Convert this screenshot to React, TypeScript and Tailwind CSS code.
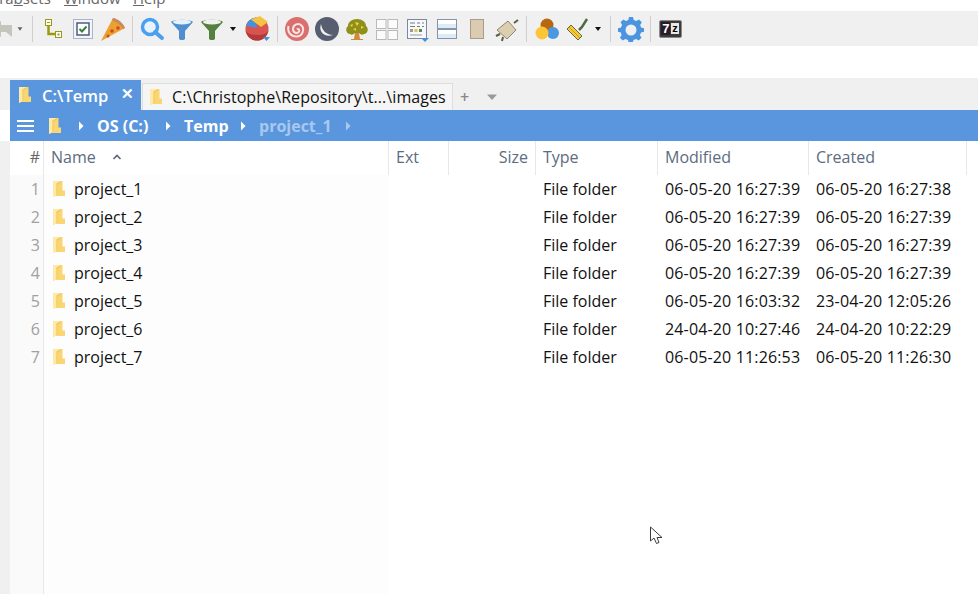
import React from "react";

const FONT = "font-['Open_Sans','Noto_Sans',sans-serif]";

const Folder = ({ className = "" }: { className?: string }) => (
  <svg width="14" height="18" viewBox="0 0 14 18" className={`shrink-0 ${className}`}>
    <path d="M1 1h9.500v9.500H13V16H3l-2 1z" fill="#f9d672" />
    <path d="M1 1h8l-4.500 2.500V15L1 17z" fill="#fdeaa8" />
    <path d="M4.500 3.500L9 1v1.500L5.500 4.500V15h-1z" fill="#f3c95e" />
  </svg>
);

const Caret = ({ color = "#111" }: { color?: string }) => (
  <svg width="12" height="6" viewBox="0 0 12 6">
    <path d="M3 1h6L6 5z" fill={color} />
  </svg>
);

const Sep = () => <div className="w-px h-[26px] bg-[#cfcfcf] shrink-0" />;

const Btn = ({ children }: { children: React.ReactNode }) => (
  <div className="w-[30px] h-[30px] shrink-0 flex items-center justify-center">
    <svg width="26" height="26" viewBox="0 0 26 26">
      {children}
    </svg>
  </div>
);

const Toolbar = () => (
  <div className="h-[35px] bg-[#f0f0f0] flex items-center overflow-hidden shrink-0">
    <div className="w-[30px] h-[30px] shrink-0 -ml-[15px] flex items-center justify-center">
      <svg width="26" height="26" viewBox="0 0 26 26">
        <path d="M1 13l13-8v4h11v12l-6-5h-5v5z" fill="#c4c6be" />
      </svg>
    </div>
    <div className="w-[10px] shrink-0 flex justify-center">
      <Caret color="#6b5f78" />
    </div>
    <div className="w-[7px] shrink-0" />
    <Sep />
    <div className="w-[5px] shrink-0" />
    <Btn>
      <rect x="5.500" y="3.500" width="6" height="6" fill="#fff" stroke="#9a9a10" />
      <path d="M7 6.500h3" stroke="#9a9a10" />
      <path d="M8.500 10v8h7" fill="none" stroke="#9a9a10" strokeWidth="2.500" />
      <rect x="15.500" y="15.500" width="6" height="6" fill="#fff" stroke="#9a9a10" />
      <rect x="17.500" y="17.500" width="2" height="2" fill="#9a9a10" />
    </Btn>
    <Btn>
      <rect x="3.500" y="3.500" width="19" height="19" fill="#f2f5fa" stroke="#a9b4cb" />
      <rect x="7" y="7" width="12" height="12" fill="#fff" stroke="#4d5d80" strokeWidth="1.500" />
      <path d="M9.500 13l2.500 2.500 4.500-5" fill="none" stroke="#3c7d3c" strokeWidth="2" />
    </Btn>
    <Btn>
      <path d="M1 25L13 2c5 1 10 5 12 10z" fill="#eaa22c" />
      <path d="M13 2c5 1 10 5 12 10l-2 1C21 9 17 6 12 4.500z" fill="#c48a6a" />
      <circle cx="12" cy="15" r="1.800" fill="#d2452f" />
      <circle cx="18" cy="12" r="1.800" fill="#d2452f" />
      <circle cx="8" cy="20" r="1.500" fill="#d2452f" />
    </Btn>
    <div className="w-[4px] shrink-0" />
    <Sep />
    <div className="w-[4px] shrink-0" />
    <Btn>
      <circle cx="11" cy="11" r="7.500" fill="#e6f3fd" stroke="#4aa0ee" strokeWidth="3.500" />
      <path d="M16 16l7 6" stroke="#4aa0ee" strokeWidth="4" strokeLinecap="round" />
    </Btn>
    <Btn>
      <path d="M2 6c2-3 20-3 22 0l-8 9v8l-1.500 1h-3L10 23v-8z" fill="#4f8fd0" />
      <ellipse cx="13" cy="6" rx="9" ry="2.500" fill="#e6f1fb" />
    </Btn>
    <Btn>
      <path d="M2 6c2-3 20-3 22 0l-8 9v8l-1.500 1h-3L10 23v-8z" fill="#55803f" />
      <ellipse cx="13" cy="6" rx="9" ry="2.500" fill="#eef2ea" />
    </Btn>
    <div className="w-[12px] shrink-0 flex justify-center">
      <Caret />
    </div>
    <div className="w-[4px] shrink-0" />
    <Btn>
      <circle cx="12" cy="13" r="11.500" fill="#d9534f" />
      <path d="M.5 13a11.500 11.500 0 0 0 23 0c0 4-5 6-11.500 6S.5 17 .5 13z" fill="#b23a3a" />
      <path d="M1 10C2 5 6 2.500 11 1.500L12 12z" fill="#4a90d9" />
      <path d="M6 3.500L15 0l8 6-7 5z" fill="#f6c244" />
      <path d="M18 21h7l-3.500 4z" fill="#4a90d9" />
    </Btn>
    <div className="w-[4px] shrink-0" />
    <Sep />
    <div className="w-[4px] shrink-0" />
    <Btn>
      <circle cx="13" cy="13" r="12" fill="#d9706f" />
      <path
        d="M13 13.500c1-1.500 3 0 2 2-1.500 2.500-6 1.500-6-2.500 0-4.500 5.500-6.500 8.500-3.500 3.500 3.500 1 11-5 11-6 0-9.500-5-8-10.500"
        fill="none"
        stroke="#f8e4e2"
        strokeWidth="2"
      />
    </Btn>
    <Btn>
      <circle cx="13" cy="13" r="12" fill="#565e70" />
      <path d="M7 8c-3 8 4 14 12 11-6 0-11-4-12-11z" fill="#f2f2f2" />
    </Btn>
    <Btn>
      <path d="M11 17h4l1 6h3v1H7v-1h3z" fill="#d08a3a" />
      <path
        d="M6 18c-4 0-5-6-2-8 0-4 4-7 9-7s9 3 9 7c3 2 2 8-2 8-2 1.500-4 0-5-1h-4c-1 1-3 2.500-5 1z"
        fill="#8f8f1a"
      />
      <path d="M6 9l3-1-1 3zM11 6l4 1-2 3zM17 10l3 1-3 2zM9 13l3-1v3z" fill="#ecd245" />
    </Btn>
    <Btn>
      <g fill="#fbfbfb" stroke="#b9b9b9">
        <rect x="2.500" y="3.500" width="9.500" height="9" />
        <rect x="14" y="3.500" width="9.500" height="9" />
        <rect x="2.500" y="14.500" width="9.500" height="9" />
        <rect x="14" y="14.500" width="9.500" height="9" />
      </g>
    </Btn>
    <Btn>
      <rect x="3.500" y="3.500" width="19" height="19" fill="#f7f8fa" stroke="#7c88a3" />
      <path d="M6 7h5M13 7h3M18 7h2M6 10.500h5M13 10.500h3M18 10.500h2" stroke="#7c7c7c" />
      <rect x="6" y="13" width="3" height="3" fill="#9a9a9a" />
      <rect x="10.500" y="13" width="3" height="3" fill="#e6c04a" />
      <rect x="15" y="13" width="3" height="3" fill="#5a8a5a" />
      <path d="M6 19h12" stroke="#9a9a9a" />
      <path d="M17 22h8l-4 4z" fill="#4a90d9" />
    </Btn>
    <Btn>
      <rect x="3.500" y="3.500" width="19" height="19" fill="#dcebf6" stroke="#8494ad" />
      <path d="M3.500 12.500h19M3.500 13.500h19" stroke="#8494ad" />
      <rect x="4" y="4" width="18" height="4" fill="#fff" />
      <rect x="4" y="14" width="18" height="4" fill="#fff" />
    </Btn>
    <Btn>
      <rect x="6.500" y="3.500" width="13" height="19" fill="#dbcbb0" stroke="#a89c8c" />
    </Btn>
    <Btn>
      <path d="M3 14L14 5l8 9-9 9z" fill="#dbcfb0" stroke="#8c8672" />
      <path d="M20 7l4-3M6 18l-4 2M9 21l-1 4" stroke="#5a5f3c" strokeWidth="2" />
    </Btn>
    <div className="w-[4px] shrink-0" />
    <Sep />
    <div className="w-[5px] shrink-0" />
    <Btn>
      <circle cx="13" cy="9" r="6.500" fill="#b8660f" />
      <circle cx="19" cy="17" r="6" fill="#4a98e0" />
      <circle cx="8" cy="17" r="6.500" fill="#fdc436" />
    </Btn>
    <Btn>
      <path d="M15 14l3-3 5-8" fill="none" stroke="#4f6b3f" strokeWidth="2.500" />
      <path d="M3 13l4-4 11 11-4 4z" fill="#f7c93a" stroke="#5a6b4a" />
      <path d="M5 11l11 11" stroke="#c79a24" />
    </Btn>
    <div className="w-[12px] shrink-0 flex justify-center">
      <Caret />
    </div>
    <div className="w-[6px] shrink-0" />
    <Sep />
    <div className="w-[5px] shrink-0" />
    <Btn>
      <path
        d="M11 1h4l.7 3 2.700 1.100 2.600-1.600 2.800 2.800-1.600 2.600L23 11.500l3 .7v3.600l-3 .7-1.100 2.700 1.600 2.600-2.800 2.800-2.600-1.600-2.700 1.100-.7 3h-4l-.7-3-2.700-1.100-2.600 1.600-2.800-2.800 1.600-2.600L3 16.500l-3-.7v-3.600l3-.7 1.100-2.700-1.600-2.600 2.800-2.800 2.600 1.600L10.300 4z"
        fill="#4a94e0"
      />
      <circle cx="13" cy="14" r="5.500" fill="#f0f0f0" />
    </Btn>
    <div className="w-[4px] shrink-0" />
    <Sep />
    <div className="w-[4px] shrink-0" />
    <div className="w-[30px] h-[30px] shrink-0 flex items-center justify-center">
      <div className="w-[23px] h-[18px] bg-[#3b3b3b] border border-[#8a8a8a] rounded-[2px] flex items-center justify-center gap-px">
        <span className="bg-[#2a1a2a] text-white text-[13px] leading-[13px] font-bold font-['Liberation_Sans',sans-serif] px-px">
          7
        </span>
        <span className="bg-[#e8e8e8] text-black text-[11px] leading-[11px] font-bold font-['Liberation_Sans',sans-serif] px-px">
          z
        </span>
      </div>
    </div>
  </div>
);

const Menu = () => (
  <div className="h-[11px] bg-white overflow-hidden shrink-0">
    <div className="flex -mt-[14px] text-[15px] leading-[24px] text-[#666] relative -left-[3px]">
      <span className="w-[67px]">
        Ta<u>b</u>sets
      </span>
      <span className="w-[69px]">
        <u>W</u>indow
      </span>
      <span>
        <u>H</u>elp
      </span>
    </div>
  </div>
);

const Tabs = () => (
  <div className="h-[32px] bg-[#f0f0f0] flex items-end pl-[10px] shrink-0">
    <div className="w-[131px] h-[30px] bg-[#5a96de] flex items-center text-white pl-[8px]">
      <Folder />
      <span className="ml-[10px] mt-[2px] text-[16.500px] font-semibold">C:\Temp</span>
      <span className="ml-[13px] -mt-[3px] text-[15px] font-semibold leading-none">✕</span>
    </div>
    <div className="ml-px w-[311px] h-[27px] bg-[#f5f5f5] border border-b-0 border-[#dedede] flex items-center pl-[6px] text-[#111] overflow-hidden">
      <Folder />
      <span className="ml-[9px] text-[16px] tracking-[0.08px] whitespace-nowrap">
        C:\Christophe\Repository\t...\images
      </span>
    </div>
    <div className="h-[27px] flex items-center text-[#888] ml-[7px]">
      <span className="text-[16px] font-semibold leading-none w-[20px]">+</span>
      <svg width="14" height="8" viewBox="0 0 14 8" className="ml-[5px]">
        <path d="M2 1.500h10L7 7z" fill="#999" />
      </svg>
    </div>
  </div>
);

const Chevron = ({ faded = false }: { faded?: boolean }) => (
  <svg width="8" height="10" viewBox="0 0 8 10" className="shrink-0">
    <path d="M2 0.500L6.500 5 2 9.500z" fill={faded ? "#a9c8ee" : "#ffffff"} />
  </svg>
);

const Breadcrumb = () => (
  <div className="h-[31px] bg-[#5a96de] ml-[10px] flex items-center text-[16px] font-bold text-white shrink-0">
    <div className="ml-[7px] w-[17px] flex flex-col gap-[3px]">
      <div className="h-[2px] bg-white" />
      <div className="h-[2px] bg-white" />
      <div className="h-[2px] bg-white" />
    </div>
    <Folder className="ml-[14px]" />
    <div className="ml-[15px]">
      <Chevron />
    </div>
    <span className="ml-[12px] w-[67px] whitespace-nowrap">OS (C:)</span>
    <Chevron />
    <span className="ml-[12px] w-[55px]">Temp</span>
    <Chevron />
    <span className="ml-[12px] w-[85px] text-[#a9c8ee]">project_1</span>
    <Chevron faded />
  </div>
);

const COLS = [
  { label: "Name", w: "w-[345px]" },
  { label: "Ext", w: "w-[60px]" },
  { label: "Size", w: "w-[87px]", right: true },
  { label: "Type", w: "w-[122px]" },
  { label: "Modified", w: "w-[151px]" },
  { label: "Created", w: "w-[158px]" },
];

const ROWS = [
  ["project_1", "06-05-20 16:27:39", "06-05-20 16:27:38"],
  ["project_2", "06-05-20 16:27:39", "06-05-20 16:27:39"],
  ["project_3", "06-05-20 16:27:39", "06-05-20 16:27:39"],
  ["project_4", "06-05-20 16:27:39", "06-05-20 16:27:39"],
  ["project_5", "06-05-20 16:03:32", "23-04-20 12:05:26"],
  ["project_6", "24-04-20 10:27:46", "24-04-20 10:22:29"],
  ["project_7", "06-05-20 11:26:53", "06-05-20 11:26:30"],
];

const Table = () => (
  <div className="flex-1 flex bg-[#f0f0f0] pl-[10px] min-h-0">
    <div className="w-[34px] shrink-0 bg-[#fafafa] border-r border-[#e8e8e8] text-right pr-[3px]">
      <div className="h-[34px] bg-white -mr-[3px] pr-[3px] pb-[2px] flex items-center justify-end text-[16px] text-[#666]">
        #
      </div>
      {ROWS.map((r, i) => (
        <div key={r[0]} className="h-[28px] leading-[28px] text-[16px] text-[#a0a0a0]">
          {i + 1}
        </div>
      ))}
    </div>
    <div className="flex-1 relative bg-white">
      <div className="flex h-[34px] text-[16px] text-[#5c6c80]">
        {COLS.map((c, i) => (
          <div
            key={c.label}
            className={`${c.w} shrink-0 pb-[2px] flex items-center border-r border-[#e8e8e8] ${c.right ? "justify-end pr-[7px]" : "pl-[7px]"}`}
          >
            {c.label}
            {i === 0 && (
              <svg width="10" height="6" viewBox="0 0 10 6" className="ml-[16px]">
                <path d="M1.500 5L5 1.500 8.500 5" fill="none" stroke="#5c6478" strokeWidth="1.600" />
              </svg>
            )}
          </div>
        ))}
      </div>
      <div className="absolute left-0 top-[34px] bottom-0 w-[345px] bg-[#fdfdfd]" />
      <div className="relative">
        {ROWS.map((r) => (
          <div key={r[0]} className="flex h-[28px] leading-[27px] items-center text-[16px] text-[#111]">
            <div className="w-[345px] shrink-0 flex items-center pl-[8px]">
              <Folder />
              <span className="ml-[8px]">{r[0]}</span>
            </div>
            <div className="w-[147px] shrink-0" />
            <div className="w-[122px] shrink-0 pl-[7px]">File folder</div>
            <div className="w-[151px] shrink-0 pl-[7px] whitespace-nowrap tracking-[0.15px]">{r[1]}</div>
            <div className="w-[158px] shrink-0 pl-[7px] whitespace-nowrap tracking-[0.15px]">{r[2]}</div>
          </div>
        ))}
      </div>
    </div>
  </div>
);

export default function App() {
  return (
    <div className={`w-[978px] h-[594px] overflow-hidden flex flex-col bg-white relative ${FONT}`}>
      <Menu />
      <Toolbar />
      <div className="h-[32px] bg-white shrink-0" />
      <Tabs />
      <Breadcrumb />
      <Table />
      {/* mouse pointer */}
      <svg width="16" height="20" viewBox="0 0 16 20" className="absolute left-[649px] top-[526px]">
        <path d="M1.500 1v14l3.500-3 2.500 5.500 2.500-1L8 11.500h5z" fill="#fff" stroke="#3c3c3c" />
      </svg>
    </div>
  );
}
